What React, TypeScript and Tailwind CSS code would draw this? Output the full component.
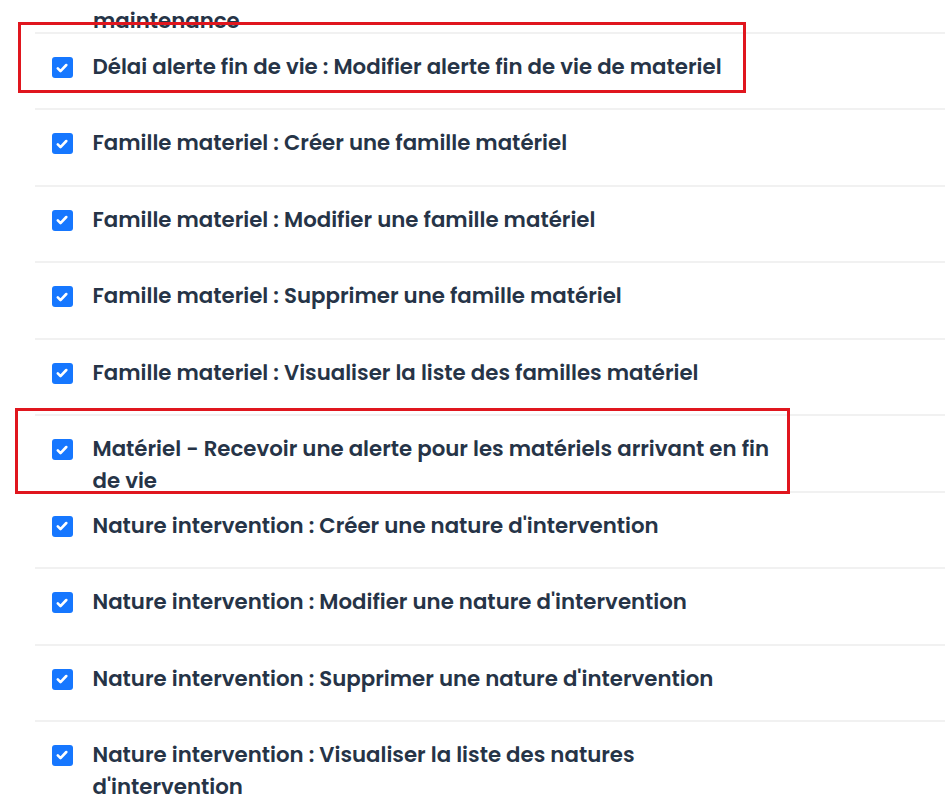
import React from "react";

const rows: string[] = [
  "Délai alerte fin de vie : Modifier alerte fin de vie de materiel",
  "Famille materiel : Créer une famille matériel",
  "Famille materiel : Modifier une famille matériel",
  "Famille materiel : Supprimer une famille matériel",
  "Famille materiel : Visualiser la liste des familles matériel",
  "Matériel - Recevoir une alerte pour les matériels arrivant en fin de vie",
  "Nature intervention : Créer une nature d'intervention",
  "Nature intervention : Modifier une nature d'intervention",
  "Nature intervention : Supprimer une nature d'intervention",
  "Nature intervention : Visualiser la liste des natures d'intervention",
];

function Check() {
  return (
    <span className="mt-[23px] flex h-[21px] w-[21px] shrink-0 items-center justify-center rounded-[3px] bg-[#1677ff]">
      <svg width="14" height="14" viewBox="0 0 16 16" fill="none">
        <path d="M3.2 8.4l3.1 3.1L12.9 4.6" stroke="white" strokeWidth="3" strokeLinecap="round" strokeLinejoin="round" />
      </svg>
    </span>
  );
}

export default function App() {
  return (
    <div className="relative h-[794px] w-[945px] overflow-hidden bg-white" style={{ fontFamily: "Poppins, Inter, 'Noto Sans', sans-serif" }}>
      <div className="pl-[35px]">
        <div className="h-[32px] pl-[58px]">
          <p className="h-[26px] pt-[5px] text-[21.3px] font-semibold leading-[32px] text-[#263447]">maintenance</p>
        </div>
        {rows.map((t, i) => (
          <div key={i} className="flex h-[76.44px] items-start gap-[20px] border-t-2 border-[#f1f1f1] pl-[16.5px]">
            <Check />
            <p className="mt-[17px] w-[684px] text-[21.3px] font-semibold leading-[32px] text-[#263447]">{t}</p>
          </div>
        ))}
      </div>
      <div className="pointer-events-none absolute left-[18px] top-[22px] h-[71px] w-[728px] border-[3.5px] border-[#e0161e]" />
      <div className="pointer-events-none absolute left-[15px] top-[408px] h-[86px] w-[775px] border-[3.5px] border-[#e0161e]" />
    </div>
  );
}
